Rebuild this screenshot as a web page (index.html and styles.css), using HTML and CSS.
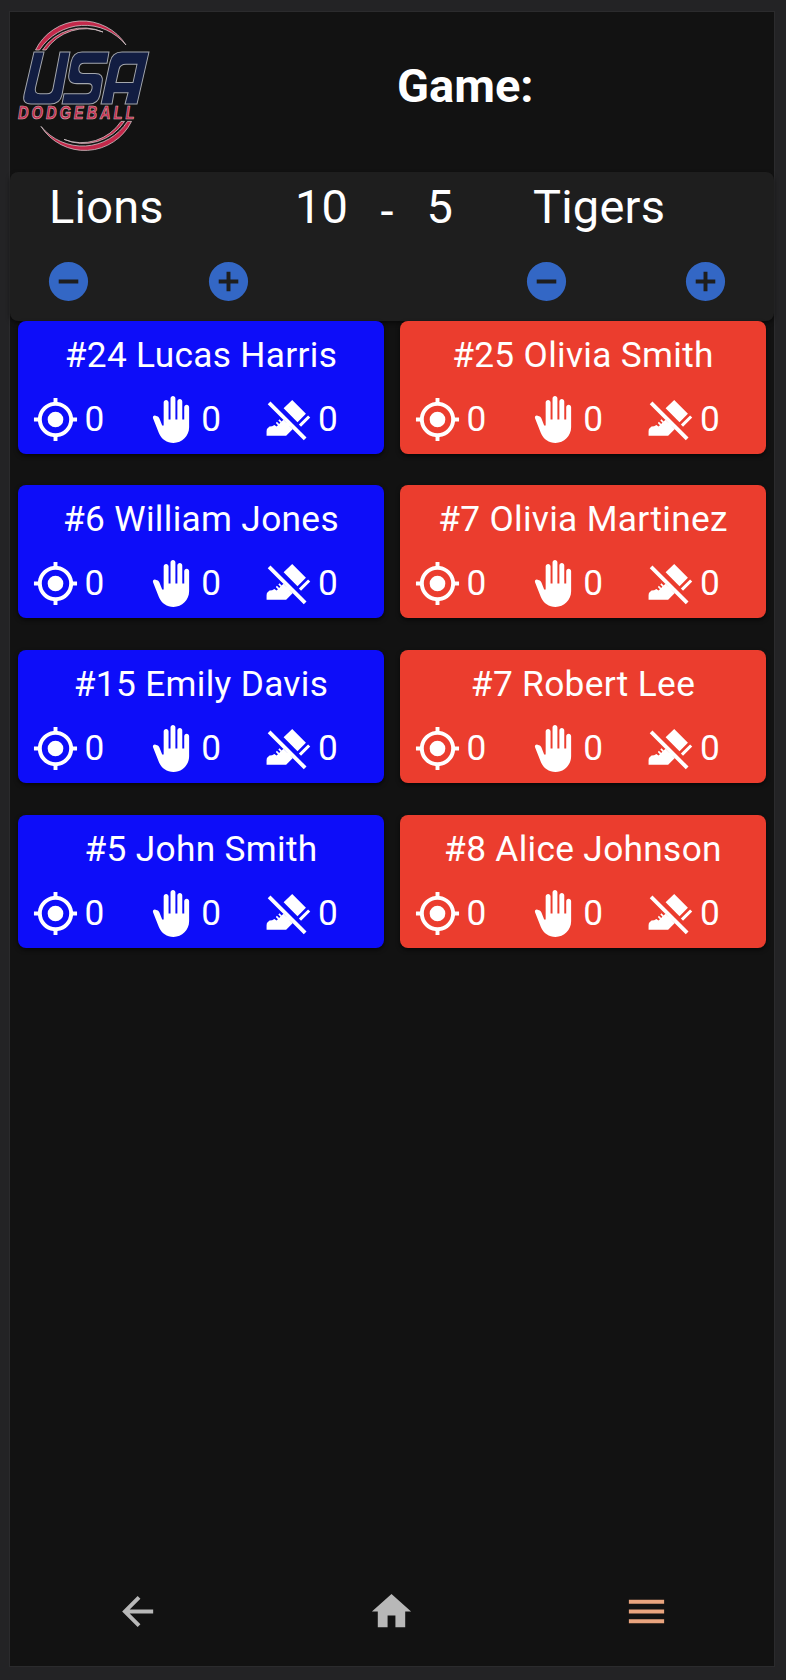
FILE: index.html
```
<!DOCTYPE html>
<html lang="en">
<head>
<meta charset="utf-8">
<title>Game</title>
<link rel="stylesheet" href="styles.css">
</head>
<body>
<svg class="defs" aria-hidden="true">
  <symbol id="minus" viewBox="0 0 24 24"><path d="M17 13H7V11H17M12 2A10 10 0 0 0 2 12A10 10 0 0 0 12 22A10 10 0 0 0 22 12A10 10 0 0 0 12 2Z"/></symbol>
  <symbol id="plus" viewBox="0 0 24 24"><path d="M17 13H13V17H11V13H7V11H11V7H13V11H17M12 2A10 10 0 0 0 2 12A10 10 0 0 0 12 22A10 10 0 0 0 22 12A10 10 0 0 0 12 2Z"/></symbol>
  <symbol id="target" viewBox="0 0 24 24"><path d="M12 8A4 4 0 0 1 16 12A4 4 0 0 1 12 16A4 4 0 0 1 8 12A4 4 0 0 1 12 8M3.05 13H1V11H3.05C3.5 6.83 6.83 3.5 11 3.05V1H13V3.05C17.17 3.5 20.5 6.83 20.95 11H23V13H20.95C20.5 17.17 17.17 20.5 13 20.95V23H11V20.95C6.83 20.5 3.5 17.17 3.05 13M12 5A7 7 0 0 0 5 12A7 7 0 0 0 12 19A7 7 0 0 0 19 12A7 7 0 0 0 12 5Z"/></symbol>
  <symbol id="hand" viewBox="0 0 24 24"><path d="M13 24C9.74 24 6.81 22 5.6 19L2.57 11.37C2.26 10.58 3 9.79 3.81 10.05L4.6 10.31C5.16 10.5 5.62 10.92 5.84 11.47L7.25 15H8V3.25C8 2.56 8.56 2 9.25 2S10.5 2.56 10.5 3.25V12H11.5V1.25C11.5 .56 12.06 0 12.75 0S14 .56 14 1.25V12H15V2.75C15 2.06 15.56 1.5 16.25 1.5C16.94 1.5 17.5 2.06 17.5 2.75V12H18.5V5.75C18.5 5.06 19.06 4.5 19.75 4.5S21 5.06 21 5.75V16C21 20.42 17.42 24 13 24Z"/></symbol>
  <symbol id="shoe" viewBox="0 0 24 24"><path d="M2.8 2.8L21.2 21.2L19.8 22.6L1.4 4.2ZM13.9 2L20.9 9L16.6 13.4L9.5 6.3ZM22 9.9L23.1 11L18.4 15.7L17.3 14.6ZM8.8 11.5L9.4 12.1L8.5 13L7.4 11.9L6.8 12.5L7.9 13.6L7.2 14.3L6.1 13.2L5.5 13.8L6.6 14.9L5.9 15.6L4.8 14.8Q3.7 15.6 2.3 15.6Q.9 16.5 .8 18V20.3H10.8L14.1 17Z"/></symbol>
  <symbol id="swoosh" viewBox="0 0 140 140"><path d="M17.500 30A52 52 0 0 1 108 25A53.500 53.500 0 0 0 21.500 30Z"/><path d="M24.500 30A49 49 0 0 1 85 12A47.500 47.500 0 0 0 28 30Z"/></symbol>
</svg>
<div class="screen">
  <header class="top">
    <svg class="logo" viewBox="0 0 140 140" role="img" aria-label="USA Dodgeball">
      <g fill="#c3284a" stroke="#cfc4c6" stroke-width=".8">
        <use href="#swoosh" width="140" height="140"/>
        <use href="#swoosh" width="140" height="140" transform="rotate(180 65.5 65.7)"/>
      </g>
      <g transform="translate(0 -8.8) scale(1 1.02)" fill="#121d42" stroke="#a4a7ad" stroke-width="1">
        <path d="M16 40H26L17.500 75Q16 81 22 81H29Q34 81 35 76L42 40H52L44 82Q42 91 32 91H13Q4 91 6 82Z"/>
        <path d="M91 40L89 51H66Q62 51 61 55Q60 61 65 61H77Q86 61 84 70L82 82Q80 91 71 91H44L46 81H68Q73 81 74 76Q75 71 70 71H59Q49 71 51 61L53 50Q55 40 64 40Z"/>
        <path fill-rule="evenodd" d="M131 40L119 91H107L110 80H96L94 91H83L92 50Q94 40 104 40ZM119 52L115 70H98L101 57Q102 52 108 52Z"/>
      </g>
      <text class="logo-name" transform="scale(.82 1)" x="0" y="99" textLength="142" lengthAdjust="spacing">DODGEBALL</text>
    </svg>
    <h1 class="title">Game:</h1>
  </header>
  <section class="score">
    <div class="names">
      <span>Lions</span><span>10</span><span class="dash">-</span><span>5</span><span>Tigers</span>
    </div>
    <div class="buttons">
      <svg class="icon"><use href="#minus"/></svg><svg class="icon"><use href="#plus"/></svg>
      <svg class="icon"><use href="#minus"/></svg><svg class="icon"><use href="#plus"/></svg>
    </div>
  </section>
  <main class="players" id="players"></main>
  <nav class="nav">
    <svg class="icon" viewBox="0 0 24 24"><path d="M20 11V13H8L13.5 18.5L12.08 19.92L4.16 12L12.08 4.08L13.5 5.5L8 11H20Z"/></svg>
    <svg class="icon" viewBox="0 0 24 24"><path d="M10 20V14H14V20H19V12H22L12 3L2 12H5V20H10Z"/></svg>
    <svg class="icon menu" viewBox="0 0 24 24"><path d="M3 6H21V8H3V6M3 11H21V13H3V11M3 16H21V18H3V16Z"/></svg>
  </nav>
</div>
<script src="app.js"></script>
</body>
</html>
```

FILE: styles.css
```
* { box-sizing: border-box; }
body {
  margin: 0;
  height: 1680px;
  padding: 11px 11px 13px 9px;
  background: #232325;
  font-family: Roboto, "Liberation Sans", sans-serif;
  color: #fff;
}
.defs { position: absolute; width: 0; height: 0; }
.screen {
  height: 1656px;
  border: 1px solid #2b2b2d;
  background: #121212;
  display: flex;
  flex-direction: column;
}
.top { height: 160px; flex: none; display: flex; padding: 8px; }
.logo { width: 140px; height: 140px; flex: none; overflow: visible; }
.logo-name {
  font: italic bold 18px "Liberation Sans", sans-serif;
  fill: #c3284a;
  stroke: #d8b4bc;
  stroke-width: .6px;
}
.title {
  margin: 36px 0 0 239px;
  font-size: 47px;
  line-height: 60px;
  font-weight: 700;
}
.score {
  height: 148.8px;
  flex: none;
  border-radius: 8px;
  background: #1e1e1e;
  box-shadow: 0 2px 4px rgba(0, 0, 0, .5);
}
.names {
  display: grid;
  grid-template-columns: 246px 85.5px 46px 106.5px auto;
  padding: 4px 0 0 39px;
  font-size: 47px;
  line-height: 62px;
  letter-spacing: .2px;
}
.dash { padding-top: 4px; }
.buttons {
  display: grid;
  grid-template-columns: 160px 318px 159px auto;
  margin-top: -4px;
  padding: 20px 0 0 35px;
}
.icon { display: block; width: 47px; height: 47px; fill: currentColor; }
.buttons .icon { color: #3367c5; }
.players {
  display: grid;
  grid-template-columns: 366px 366px;
  column-gap: 16px;
  grid-auto-rows: 164.6px;
  padding-left: 8px;
}
.player {
  height: 133px;
  border-radius: 8px;
  background: #0d0df9;
  box-shadow: 0 2px 4px rgba(0, 0, 0, .6);
}
.player.red { background: #eb3d2e; }
.player-name {
  padding-top: 10px;
  font-size: 35.26px;
  line-height: 48px;
  letter-spacing: .33px;
  text-align: center;
  white-space: nowrap;
}
.stats {
  display: grid;
  grid-template-columns: repeat(3, 116.7px);
  padding: 17px 0 0 13.5px;
  font-size: 35.26px;
  line-height: 47px;
}
.stat { display: flex; gap: 6px; }
.nav {
  margin-top: auto;
  height: 108px;
  display: grid;
  grid-template-columns: repeat(3, 1fr);
  justify-items: center;
  padding: 30px 0 0;
  color: #b8b8b8;
}
.menu { color: #e9a47e; }
```

FILE: app.js
```
const players = [
  "#24 Lucas Harris", "#25 Olivia Smith",
  "#6 William Jones", "#7 Olivia Martinez",
  "#15 Emily Davis", "#7 Robert Lee",
  "#5 John Smith", "#8 Alice Johnson"
];
const stat = (icon) => `<span class="stat"><svg class="icon"><use href="#${icon}"/></svg>0</span>`;
document.getElementById("players").innerHTML = players.map((name, i) => `
  <article class="player ${i % 2 ? "red" : "blue"}">
    <div class="player-name">${name}</div>
    <div class="stats">${["target", "hand", "shoe"].map(stat).join("")}</div>
  </article>`).join("");
```
